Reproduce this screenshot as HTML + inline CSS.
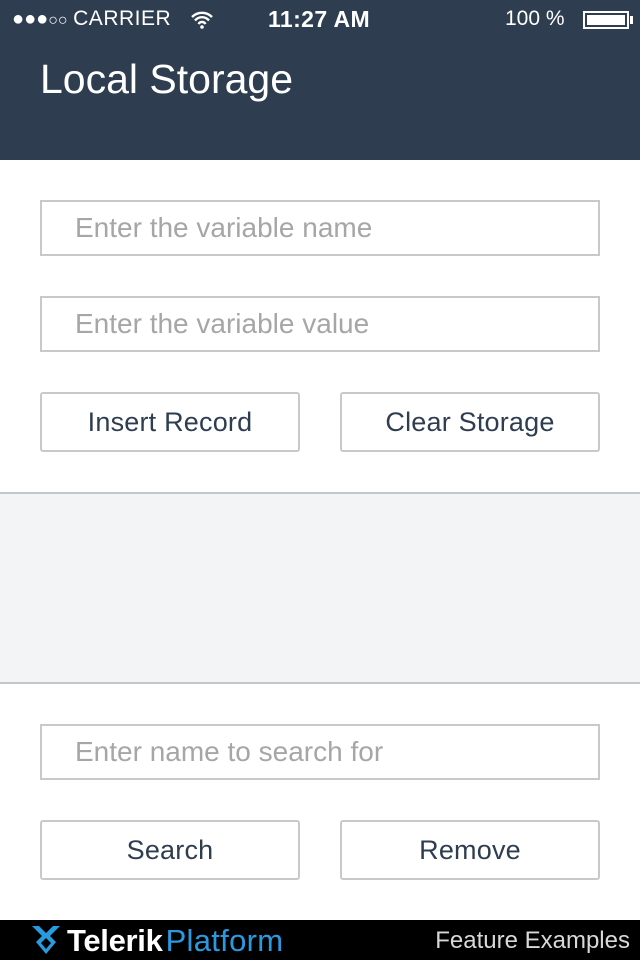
<!DOCTYPE html>
<html><head><meta charset="utf-8"><style>
*{margin:0;padding:0;box-sizing:border-box}
body{width:640px;height:960px;position:relative;background:#fff;font-family:"Liberation Sans",sans-serif;overflow:hidden}
.hdr{position:absolute;left:0;top:0;width:640px;height:160px;background:#2e3e50;color:#fff}
.sb{position:absolute;top:7px;font-size:21px;color:#fff}
.title{position:absolute;left:40px;top:56px;font-size:41px}
.in{position:absolute;left:40px;width:560px;height:56px;border:2px solid #c8c9cb;color:#a6a6a6;font-size:28px;padding-left:33px;line-height:52px}
.btn{position:absolute;width:260px;height:60px;border:2px solid #c8c9cb;border-radius:3px;color:#2e3e50;font-size:27px;letter-spacing:0.2px;text-align:center;line-height:56px}
.gray{position:absolute;left:0;top:492px;width:640px;height:192px;background:#f3f4f6;border-top:2px solid #c3c6cb;border-bottom:2px solid #c3c6cb}
.ft{position:absolute;left:0;top:920px;width:640px;height:40px;background:#000}
</style></head><body>
<div class="hdr">
<div class="sb" style="left:12px;font-size:20px">●●●<span style="font-size:16px">○○</span> <span style="font-size:21px;letter-spacing:0.5px">CARRIER</span></div>
<svg style="position:absolute;left:190px;top:10px" width="24" height="20" viewBox="0 0 24 20"><path d="M2 7a14 14 0 0 1 20 0M5 10.5a9 9 0 0 1 14 0M8.5 14a4 4 0 0 1 7 0" stroke="#fff" stroke-width="2.4" fill="none"/><circle cx="12" cy="17" r="1.8" fill="#fff"/></svg>
<div class="sb" style="left:268px;top:6px;font-weight:bold;font-size:23px;letter-spacing:0.4px">11:27 AM</div>
<div class="sb" style="left:505px">100 %</div>
<div style="position:absolute;left:583px;top:11px;width:46px;height:18px;border:2px solid #fff;padding:2px"><div style="background:#fff;width:100%;height:100%"></div></div>
<div style="position:absolute;left:630px;top:16px;width:3px;height:8px;background:#fff"></div>
<div class="title">Local Storage</div>
</div>
<div class="in" style="top:200px">Enter the variable name</div>
<div class="in" style="top:296px">Enter the variable value</div>
<div class="btn" style="left:40px;top:392px">Insert Record</div>
<div class="btn" style="left:340px;top:392px">Clear Storage</div>
<div class="gray"></div>
<div class="in" style="top:724px">Enter name to search for</div>
<div class="btn" style="left:40px;top:820px">Search</div>
<div class="btn" style="left:340px;top:820px">Remove</div>
<div class="ft">
<svg style="position:absolute;left:28px;top:2px" width="36" height="34" viewBox="0 0 36 34"><path d="M4 4l7 0 7 7 7-7 7 0-10 10 6 6-10 12-10-12 6-6z" fill="#2a9ae0"/><path d="M18 16l5 5-5 6-5-6z" fill="#000"/></svg>
<div style="position:absolute;left:67px;top:3px;font-size:31px;color:#fff;font-weight:bold;letter-spacing:-0.3px">Telerik<span style="font-weight:normal;color:#2a9ae0;margin-left:3px;letter-spacing:0.3px">Platform</span></div>
<div style="position:absolute;right:10px;top:7px;font-size:24px;color:#d8d8d8">Feature Examples</div>
</div>
</body></html>
